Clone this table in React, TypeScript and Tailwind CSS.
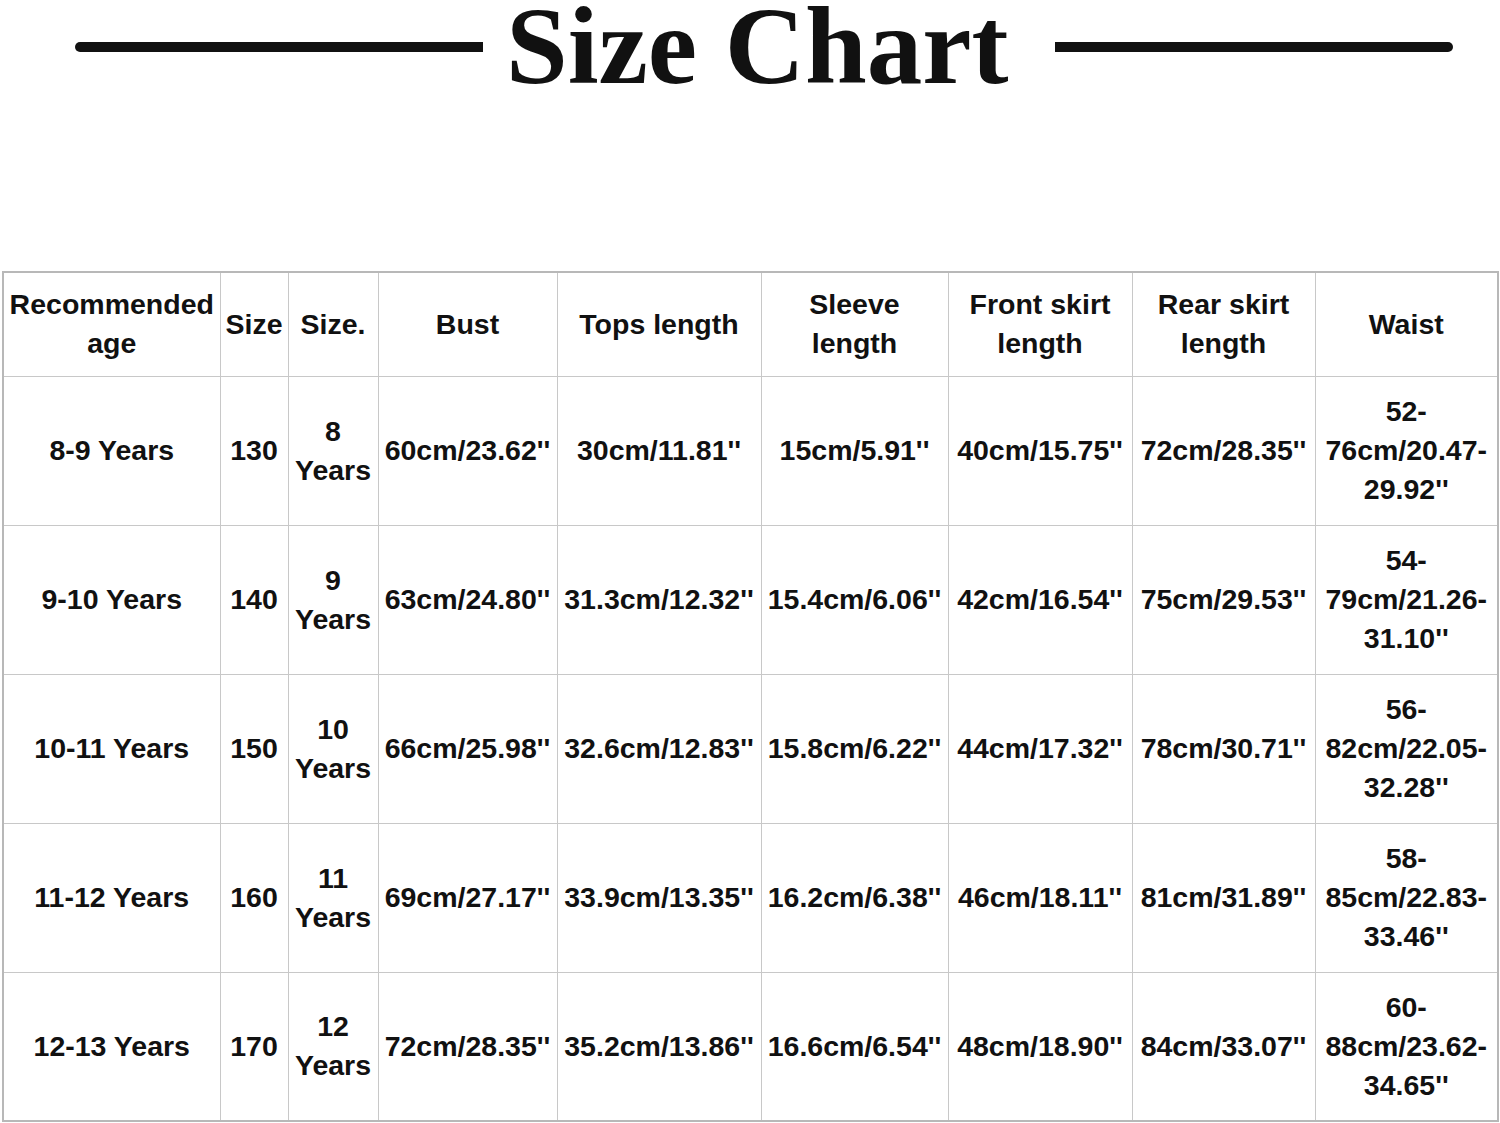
import React from "react";

const headers: React.ReactNode[] = [
  <>Recommended<br />age</>,
  <>Size</>,
  <>Size.</>,
  <>Bust</>,
  <>Tops length</>,
  <>Sleeve<br />length</>,
  <>Front skirt<br />length</>,
  <>Rear skirt<br />length</>,
  <>Waist</>,
];

const widths = ["w-[217px]", "w-[68px]", "w-[90px]", "w-[179px]", "w-[204px]", "w-[187px]", "w-[184px]", "w-[183px]", "w-[183px]"];

const rows = [
  ["8-9 Years", "130", "8", "60cm/23.62''", "30cm/11.81''", "15cm/5.91''", "40cm/15.75''", "72cm/28.35''", ["52-", "76cm/20.47-", "29.92''"]],
  ["9-10 Years", "140", "9", "63cm/24.80''", "31.3cm/12.32''", "15.4cm/6.06''", "42cm/16.54''", "75cm/29.53''", ["54-", "79cm/21.26-", "31.10''"]],
  ["10-11 Years", "150", "10", "66cm/25.98''", "32.6cm/12.83''", "15.8cm/6.22''", "44cm/17.32''", "78cm/30.71''", ["56-", "82cm/22.05-", "32.28''"]],
  ["11-12 Years", "160", "11", "69cm/27.17''", "33.9cm/13.35''", "16.2cm/6.38''", "46cm/18.11''", "81cm/31.89''", ["58-", "85cm/22.83-", "33.46''"]],
  ["12-13 Years", "170", "12", "72cm/28.35''", "35.2cm/13.86''", "16.6cm/6.54''", "48cm/18.90''", "84cm/33.07''", ["60-", "88cm/23.62-", "34.65''"]],
] as const;

export default function App() {
  return (
    <div className="w-[1500px] h-[1123px] bg-white overflow-hidden">
      {/* Title */}
      <div className="h-[271px] flex items-start pl-[75px]">
        <div className="mt-[42px] w-[408px] h-[10px] bg-[#111] rounded-l-full" />
        <span className="ml-[23px] text-[111px] leading-[92px] font-bold text-[#111] whitespace-nowrap [font-family:'Liberation_Serif',serif]">
          Size Chart
        </span>
        <div className="ml-[47px] mt-[42px] w-[398px] h-[10px] bg-[#111] rounded-r-full" />
      </div>

      {/* Table */}
      <table className="ml-[2px] w-[1495px] table-fixed border-collapse border-2 border-[#b8b8b8] text-[28.5px] leading-[39px] font-bold text-[#111] text-center [font-family:'Liberation_Sans',Arial,sans-serif]">
        <thead>
          <tr className="h-[104px]">
            {headers.map((h, i) => (
              <th key={i} className={`${widths[i]} border border-[#c8c8c8] p-0 font-bold align-middle`}>
                {h}
              </th>
            ))}
          </tr>
        </thead>
        <tbody>
          {rows.map((r, ri) => (
            <tr key={ri} className="h-[149px]">
              {r.map((c, ci) => (
                <td key={ci} className="border border-[#c8c8c8] p-0 align-middle whitespace-nowrap">
                  {ci === 2 ? (
                    <>
                      {c}
                      <br />
                      Years
                    </>
                  ) : Array.isArray(c) ? (
                    c.map((l, li) => (
                      <div key={li}>{l}</div>
                    ))
                  ) : (
                    c
                  )}
                </td>
              ))}
            </tr>
          ))}
        </tbody>
      </table>
    </div>
  );
}
